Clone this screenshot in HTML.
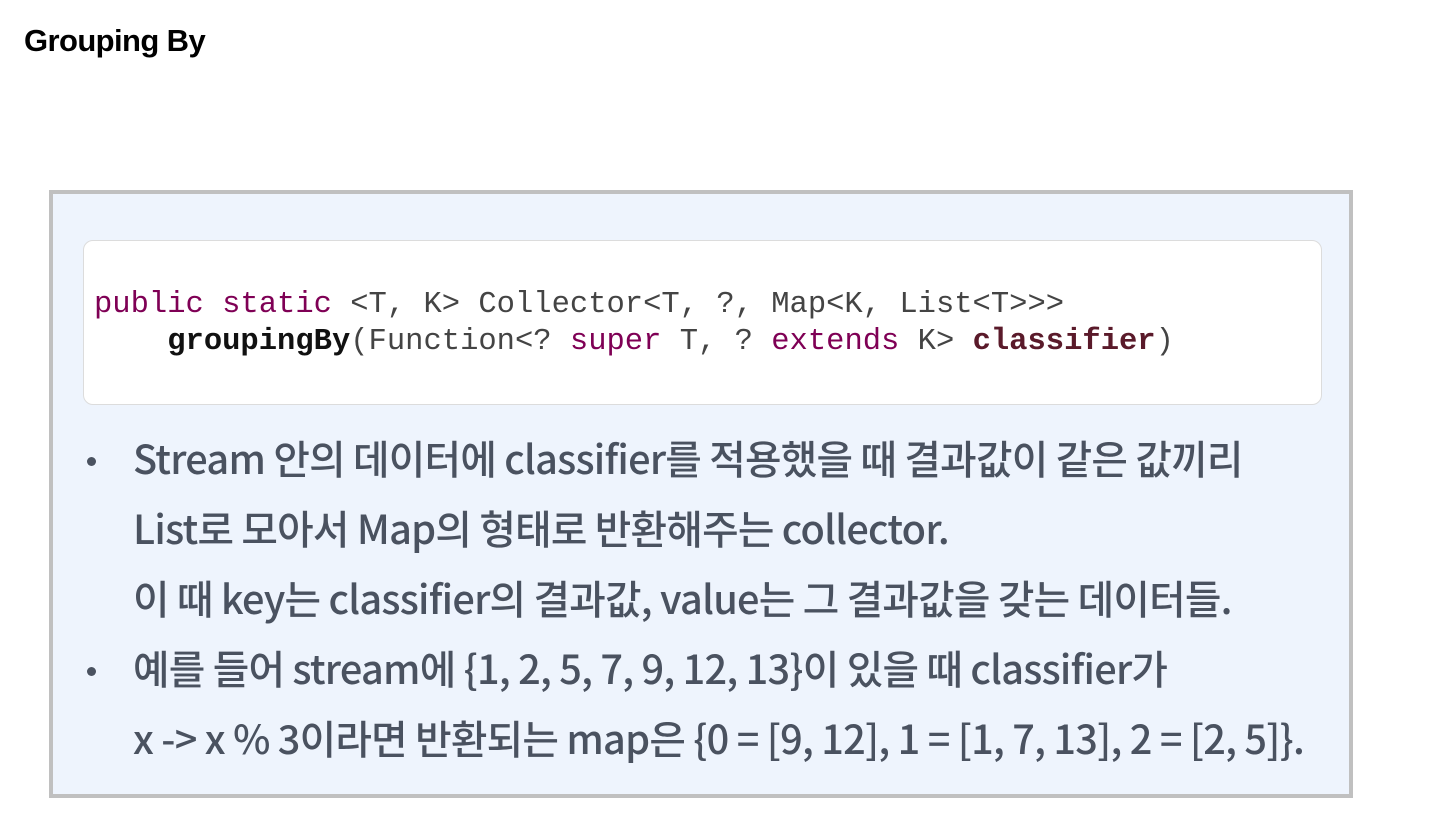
<!DOCTYPE html>
<html><head><meta charset="utf-8"><style>
body{margin:0;width:1430px;height:836px;background:#fff;position:relative;overflow:hidden;font-family:"Liberation Sans","Noto Sans CJK KR",sans-serif}
.title{position:absolute;left:24px;top:23px;font-size:31px;font-weight:bold;color:#000;letter-spacing:-0.6px}
.box{position:absolute;left:49px;top:190px;width:1296px;height:600px;background:#eef4fd;border:4px solid #c0c0c0}
.code{position:absolute;left:30px;top:46px;width:1237px;height:163px;background:#fff;border:1px solid #dcdcdc;border-radius:10px}
.code pre{margin:0;position:absolute;left:10px;top:46px;font-family:"Liberation Mono",monospace;font-size:30.5px;line-height:37px;color:#444}
.k{color:#7f0055}.b{font-weight:bold;color:#111}.p{font-weight:bold;color:#5a1a2a}
.t{position:absolute;left:80px;font-size:39.7px;color:#4a5260;font-weight:500;letter-spacing:-0.75px;white-space:nowrap;font-family:"Noto Sans CJK KR",sans-serif}
.dot{position:absolute;left:34px;width:9px;height:9px;border-radius:50%;background:#4a5260}
</style></head><body>
<div class="title">Grouping By</div>
<div class="box">
<div class="code"><pre><span class="k">public static</span> &lt;T, K&gt; Collector&lt;T, ?, Map&lt;K, List&lt;T&gt;&gt;&gt;
    <span class="b">groupingBy</span>(Function&lt;? <span class="k">super</span> T, ? <span class="k">extends</span> K&gt; <span class="p">classifier</span>)</pre></div>
<div class="dot" style="top:263px"></div>
<div class="t" style="top:235px">Stream 안의 데이터에 classifier를 적용했을 때 결과값이 같은 값끼리</div>
<div class="t" style="top:305px">List로 모아서 Map의 형태로 반환해주는 collector.</div>
<div class="t" style="top:375px">이 때 key는 classifier의 결과값, value는 그 결과값을 갖는 데이터들.</div>
<div class="dot" style="top:473px"></div>
<div class="t" style="top:445px">예를 들어 stream에 {1, 2, 5, 7, 9, 12, 13}이 있을 때 classifier가</div>
<div class="t" style="top:515px">x -&gt; x % 3이라면 반환되는 map은 {0 = [9, 12], 1 = [1, 7, 13], 2 = [2, 5]}.</div>
</div>
</body></html>
